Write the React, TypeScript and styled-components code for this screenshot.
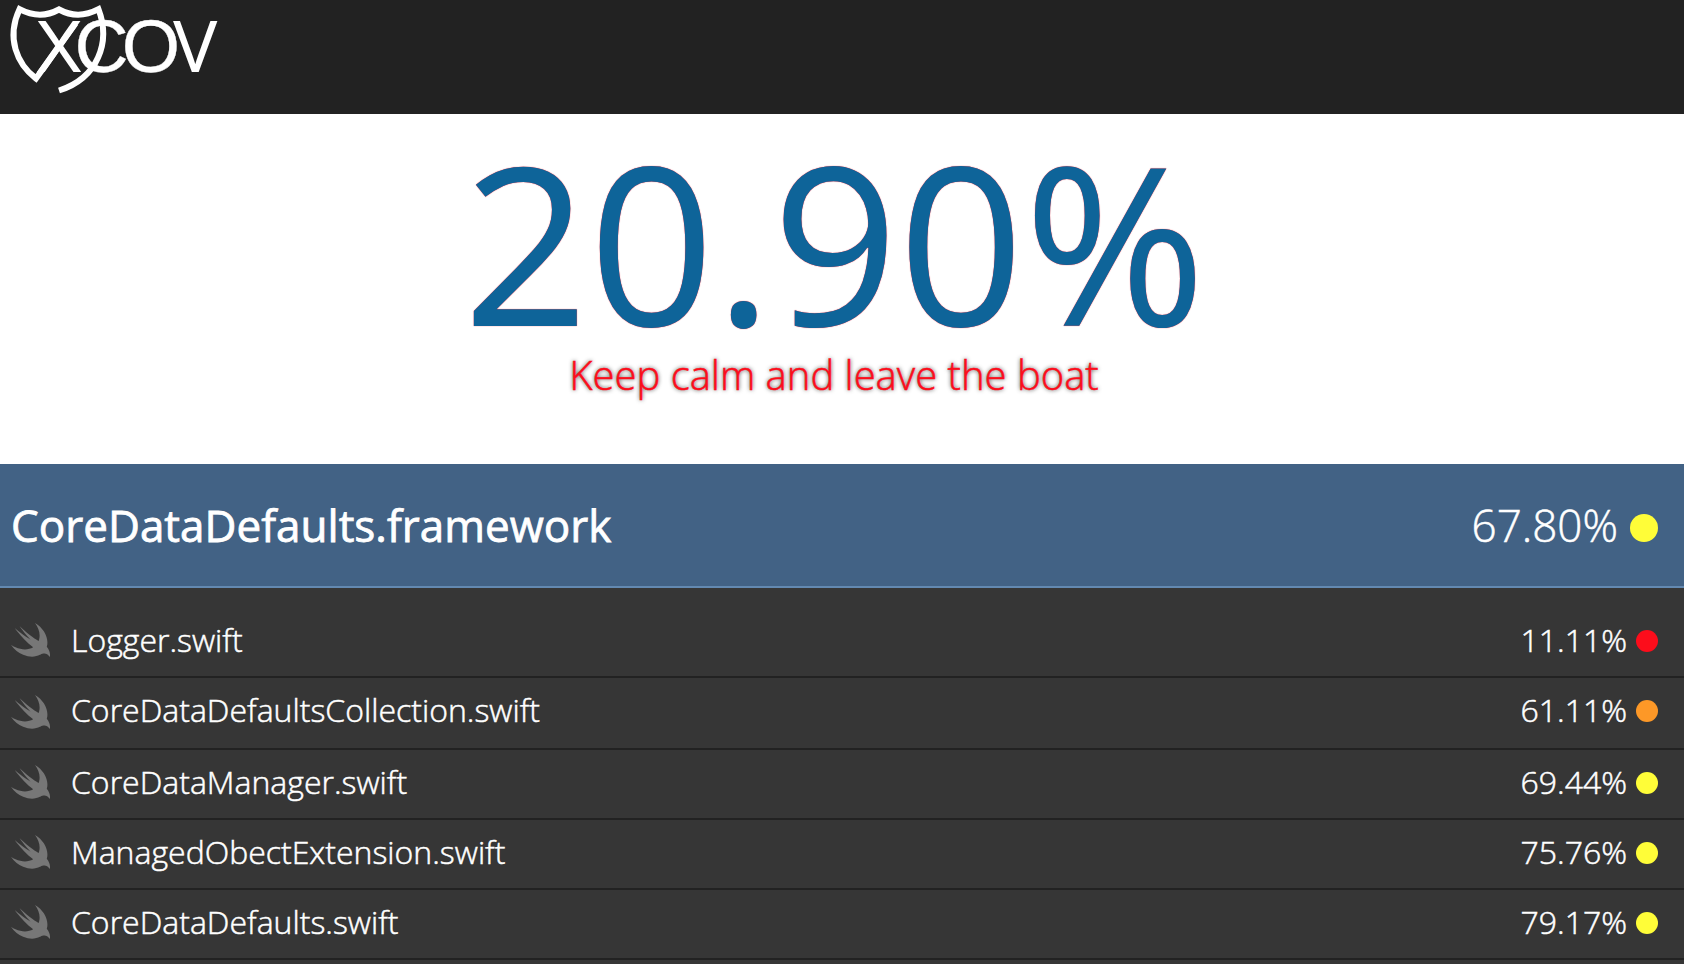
import React from "react";
import styled, { createGlobalStyle } from "styled-components";

const GlobalStyle = createGlobalStyle`
  html, body { margin: 0; padding: 0; background: #363636; }
  body { height: 964px; overflow: hidden; font-family: "Open Sans", sans-serif; color: #fff; }
  * { box-sizing: border-box; }
`;

const Header = styled.header`
  height: 114px;
  background: #222;
`;

const Logo = styled.svg`
  display: block;
  width: 230px;
  height: 114px;
`;

const Summary = styled.section`
  height: 350px;
  padding: 20px 16px 0 0;
  background: #fff;
  display: flex;
  flex-direction: column;
  align-items: center;
`;

const Total = styled.div`
  height: 214px;
  padding-left: 1px;
  line-height: 214px;
  font-size: 220px;
  white-space: nowrap;
  color: #0e6499;
  text-shadow: 0 0 1px #fc0d1b;
`;

const Tagline = styled.div`
  line-height: 54px;
  font-size: 40px;
  font-weight: 300;
  white-space: nowrap;
  color: #fc0d1b;
  -webkit-text-stroke: 0.5px #fc0d1b;
  text-shadow: 0 0 4px rgba(0, 0, 0, 0.8);
`;

const Target = styled.div`
  height: 124px;
  padding: 0 26px 0 11px;
  display: flex;
  align-items: center;
  justify-content: space-between;
  background: #426285;
  border-bottom: 2px solid #6389b1;
  font-size: 44px;
  line-height: 60px;
`;

const Files = styled.ul`
  margin: 0;
  padding: 20px 0 0;
  list-style: none;
  background: #363636;
`;

const FileRow = styled.li<{ $extra?: number }>`
  height: ${(p) => 70 + (p.$extra ?? 0)}px;
  padding: 0 26px ${(p) => 2 + (p.$extra ?? 0)}px 11px;
  display: flex;
  align-items: center;
  border-bottom: 2px solid #222;
  font-size: 32px;
  font-weight: 300;
  line-height: 44px;
`;

const Bird = styled.svg<{ $drop?: number }>`
  width: 39px;
  height: 34px;
  margin-right: 21px;
  margin-top: ${(p) => -2 + 2 * (p.$drop ?? 0)}px;
  fill: #777;
`;

const FileName = styled.span`
  flex: 1;
  margin-top: -2px;
  -webkit-text-stroke: 0.5px #fff;
`;

const TargetName = styled.span`
  font-weight: 400;
  letter-spacing: 0.02px;
  -webkit-text-stroke: 0.8px #fff;
`;

const Coverage = styled.span<{ $gap: number; $top?: number }>`
  display: flex;
  align-items: center;
  gap: ${(p) => p.$gap}px;
  padding-top: ${(p) => p.$top ?? 0}px;
  font-weight: 300;
`;

const Value = styled.span<{ $lift: number }>`
  margin-top: ${(p) => -p.$lift}px;
  -webkit-text-stroke: 0.5px #fff;
`;

const Dot = styled.i<{ $size: number; $color: string }>`
  width: ${(p) => p.$size}px;
  height: ${(p) => p.$size}px;
  border-radius: 50%;
  background: ${(p) => p.$color};
`;

const RED = "#fc0d1b";
const ORANGE = "#fd9827";
const YELLOW = "#fffd38";

const files = [
  { name: "Logger.swift", value: "11.11%", color: RED },
  { name: "CoreDataDefaultsCollection.swift", value: "61.11%", color: ORANGE, extra: 2 },
  { name: "CoreDataManager.swift", value: "69.44%", color: YELLOW },
  { name: "ManagedObectExtension.swift", value: "75.76%", color: YELLOW },
  { name: "CoreDataDefaults.swift", value: "79.17%", color: YELLOW },
];

function SwiftBird({ drop }: { drop?: number }) {
  return (
    <Bird $drop={drop} viewBox="2.41 3.41 18.1 16.3" preserveAspectRatio="none">
      <path d="M13.543 3.41c4.114 2.47 6.545 7.162 5.549 11.131-.024.093-.05.181-.076.272l.002.001c2.062 2.538 1.5 5.258 1.236 4.745-1.072-2.086-3.066-1.568-4.088-1.043a6.803 6.803 0 0 1-.281.158l-.02.012-.002.002c-2.115 1.123-4.957 1.205-7.812-.022a12.568 12.568 0 0 1-5.64-4.838c.649.48 1.35.902 2.097 1.252 3.019 1.414 6.051 1.311 8.197-.002C9.651 12.73 7.101 9.67 5.146 7.191a10.628 10.628 0 0 1-1.005-1.384c2.34 2.142 6.038 4.83 7.365 5.576C8.69 8.408 6.208 4.743 6.324 4.86c4.436 4.466 8.527 6.996 8.527 6.996.154.085.27.154.36.213.085-.215.16-.437.224-.668.708-2.588-.09-5.548-1.893-7.992z" />
    </Bird>
  );
}

function XcovLogo() {
  return (
    <Logo viewBox="0 0 230 114">
      <path
        d="M75.500 23.500 L36 78.5 C17 64 6 38 19.500 9.200 Q40 20 59 9.500 Q78 20 98.500 9.200 C111 42 98 78 59 90.500"
        fill="none"
        stroke="#fff"
        strokeWidth="6"
      />
      <g fill="#fff">
        <g fontFamily="Inter, sans-serif" fontWeight="300" fontSize="67.5" stroke="#fff" strokeWidth="1.8">
          <text x="36.800" y="71">X</text>
          <text x="172.600" y="71">V</text>
        </g>
        <g fontFamily="Liberation Sans, sans-serif" fontSize="75" stroke="#fff" strokeWidth="0.3">
          <text x="74.600" y="72.400">C</text>
          <text x="121.800" y="72.400">O</text>
        </g>
      </g>
    </Logo>
  );
}

export default function App() {
  return (
    <>
      <GlobalStyle />
      <Header>
        <XcovLogo />
      </Header>
      <Summary>
        <Total>20.90%</Total>
        <Tagline>Keep calm and leave the boat</Tagline>
      </Summary>
      <Target>
        <TargetName>CoreDataDefaults.framework</TargetName>
        <Coverage $gap={12} $top={6}>
          <Value $lift={6}>67.80%</Value>
          <Dot $size={28} $color={YELLOW} />
        </Coverage>
      </Target>
      <Files>
        {files.map((f) => (
          <FileRow key={f.name} $extra={f.extra}>
            <SwiftBird drop={f.extra} />
            <FileName>{f.name}</FileName>
            <Coverage $gap={9}>
              <Value $lift={2}>{f.value}</Value>
              <Dot $size={22} $color={f.color} />
            </Coverage>
          </FileRow>
        ))}
      </Files>
    </>
  );
}
